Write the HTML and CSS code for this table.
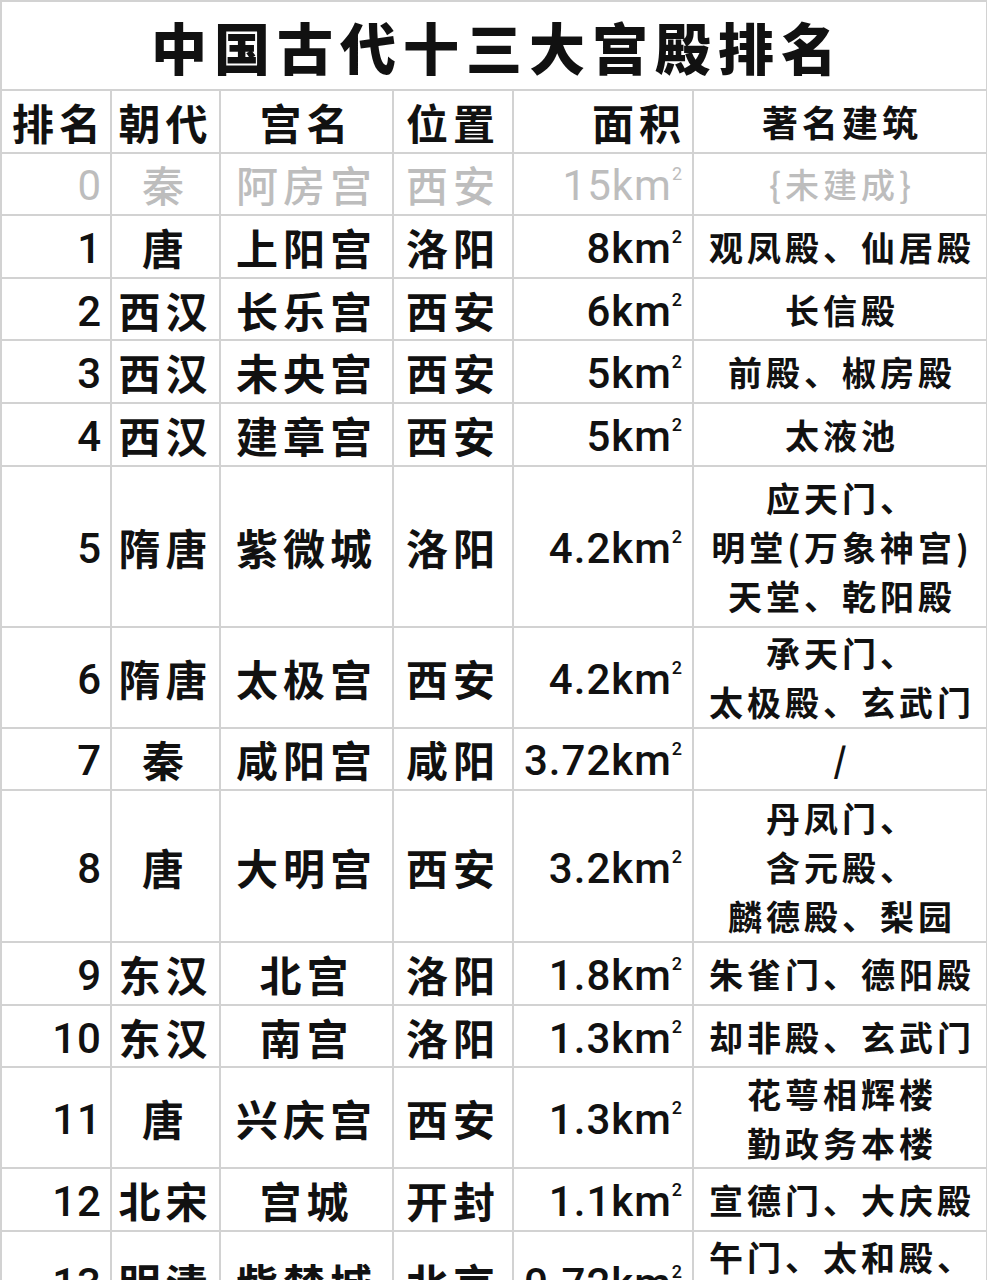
FILE: index.html
```html
<!DOCTYPE html>
<html lang="zh-CN">
<head>
<meta charset="utf-8">
<title>中国古代十三大宫殿排名</title>
<link rel="stylesheet" href="styles.css">
</head>
<body>
<table class="rank">
  <colgroup>
    <col class="c-rank"><col class="c-dyn"><col class="c-name"><col class="c-loc"><col class="c-area"><col class="c-bld">
  </colgroup>
  <thead>
    <tr class="r-title"><th colspan="6" class="title">中国古代十三大宫殿排名</th></tr>
    <tr class="r1 head">
      <th class="num">排名</th><th>朝代</th><th>宫名</th><th>位置</th><th class="area hd-area">面积</th><th class="bld">著名建筑</th>
    </tr>
  </thead>
  <tbody>
    <tr class="r1 muted">
      <td class="num">0</td><td>秦</td><td>阿房宫</td><td>西安</td><td class="area">15km<span class="sq">2</span></td><td class="bld">{未建成}</td>
    </tr>
    <tr class="r1">
      <td class="num">1</td><td>唐</td><td>上阳宫</td><td>洛阳</td><td class="area">8km<span class="sq">2</span></td><td class="bld">观凤殿、仙居殿</td>
    </tr>
    <tr class="r1">
      <td class="num">2</td><td>西汉</td><td>长乐宫</td><td>西安</td><td class="area">6km<span class="sq">2</span></td><td class="bld">长信殿</td>
    </tr>
    <tr class="r1">
      <td class="num">3</td><td>西汉</td><td>未央宫</td><td>西安</td><td class="area">5km<span class="sq">2</span></td><td class="bld">前殿、椒房殿</td>
    </tr>
    <tr class="r1">
      <td class="num">4</td><td>西汉</td><td>建章宫</td><td>西安</td><td class="area">5km<span class="sq">2</span></td><td class="bld">太液池</td>
    </tr>
    <tr class="r3">
      <td class="num">5</td><td>隋唐</td><td>紫微城</td><td>洛阳</td><td class="area">4.2km<span class="sq">2</span></td><td class="bld">应天门、<br>明堂(万象神宫)<br>天堂、乾阳殿</td>
    </tr>
    <tr class="r2">
      <td class="num">6</td><td>隋唐</td><td>太极宫</td><td>西安</td><td class="area">4.2km<span class="sq">2</span></td><td class="bld">承天门、<br>太极殿、玄武门</td>
    </tr>
    <tr class="r1">
      <td class="num">7</td><td>秦</td><td>咸阳宫</td><td>咸阳</td><td class="area">3.72km<span class="sq">2</span></td><td class="bld">/</td>
    </tr>
    <tr class="r3b">
      <td class="num">8</td><td>唐</td><td>大明宫</td><td>西安</td><td class="area">3.2km<span class="sq">2</span></td><td class="bld">丹凤门、<br>含元殿、<br>麟德殿、梨园</td>
    </tr>
    <tr class="r1">
      <td class="num">9</td><td>东汉</td><td>北宫</td><td>洛阳</td><td class="area">1.8km<span class="sq">2</span></td><td class="bld">朱雀门、德阳殿</td>
    </tr>
    <tr class="r1">
      <td class="num">10</td><td>东汉</td><td>南宫</td><td>洛阳</td><td class="area">1.3km<span class="sq">2</span></td><td class="bld">却非殿、玄武门</td>
    </tr>
    <tr class="r2">
      <td class="num">11</td><td>唐</td><td>兴庆宫</td><td>西安</td><td class="area">1.3km<span class="sq">2</span></td><td class="bld">花萼相辉楼<br>勤政务本楼</td>
    </tr>
    <tr class="r1">
      <td class="num">12</td><td>北宋</td><td>宫城</td><td>开封</td><td class="area">1.1km<span class="sq">2</span></td><td class="bld">宣德门、大庆殿</td>
    </tr>
    <tr class="r2">
      <td class="num">13</td><td>明清</td><td>紫禁城</td><td>北京</td><td class="area">0.72km<span class="sq">2</span></td><td class="bld">午门、太和殿、<br>乾清宫</td>
    </tr>
  </tbody>
</table>
</body>
</html>
```
FILE: styles.css
```css
html, body {
  margin: 0;
  padding: 0;
  background: #ffffff;
}
html {
  overflow: hidden;
}
body {
  font-family: "Noto Sans CJK SC", "Noto Sans", sans-serif;
  color: #111111;
}
.rank {
  border-collapse: collapse;
  width: 986px;
  table-layout: fixed;
}
.c-rank { width: 110px; }
.c-dyn { width: 109px; }
.c-name { width: 173px; }
.c-loc { width: 120px; }
.c-area { width: 180px; }
.c-bld { width: 294px; }

.rank th,
.rank td {
  border: 2px solid #d2d2d2;
  padding: 0;
  text-align: center;
  vertical-align: middle;
  font-weight: 700;
  font-size: 42px;
  line-height: 49px;
  letter-spacing: 5px;
  white-space: nowrap;
  overflow: hidden;
}
.r-title { height: 89px; }
.r1 { height: 62.6px; }
.r2 { height: 101px; }
.r3 { height: 161px; }
.r3b { height: 152px; }

.rank .title {
  font-size: 56px;
  letter-spacing: 7px;
  font-weight: 900;
  line-height: 70px;
  padding-left: 7px;
}
.rank .num {
  text-align: right;
  padding-right: 4px;
}
.rank td.num {
  font-family: Roboto, "Liberation Sans", sans-serif;
  font-weight: 500;
  letter-spacing: 1px;
  padding-right: 8px;
  padding-top: 4px;
}
.rank .area {
  text-align: right;
  padding-right: 6px;
}
.rank td.area {
  font-family: Roboto, "Liberation Sans", sans-serif;
  font-weight: 500;
  letter-spacing: 1px;
  padding-right: 10px;
  padding-top: 4px;
}
.sq {
  font-size: 18px;
  vertical-align: 20px;
  line-height: 0;
  letter-spacing: 0;
}
.rank .bld {
  font-size: 34px;
  letter-spacing: 4px;
  padding-left: 4px;
}
.rank th.bld {
  font-size: 36px;
}
.muted td {
  color: #bdbdbd;
  font-weight: 500;
}
.rank .muted td.num,
.rank .muted td.area {
  font-weight: 400;
}
```
